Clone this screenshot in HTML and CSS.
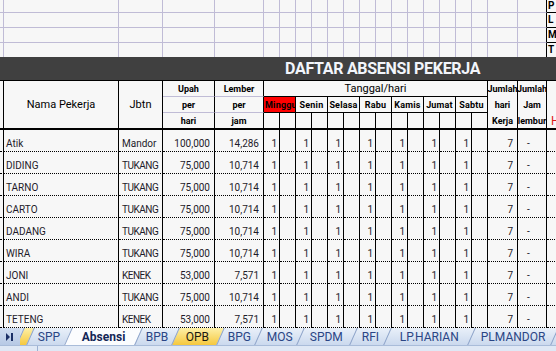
FILE: index.html
```html
<!DOCTYPE html>
<html lang="id">
<head>
  <meta charset="UTF-8">
  <meta name="viewport" content="width=device-width, initial-scale=1.0">
  <title>Daftar Absensi Pekerja</title>
  <link rel="stylesheet" href="styles.css">
</head>
<body>
  <div class="sheet">
    <div class="topgrid" id="topgrid"></div>

    <div class="band"><h1>DAFTAR ABSENSI PEKERJA</h1></div>

    <div class="head">
      <div class="h rn"></div>
      <div class="h tall">Nama Pekerja</div>
      <div class="h tall">Jbtn</div>
      <div class="h sm soft">Upah</div>
      <div class="h sm soft">Lember</div>
      <div class="h tanggal">Tanggal/hari</div>
      <div class="h sm">Jumlah</div>
      <div class="h sm">Jumlah</div>
      <div class="h xtra"></div>

      <div class="h sm soft">per</div>
      <div class="h sm soft">per</div>
      <div class="h sm day minggu">Minggu</div>
      <div class="h sm day">Senin</div>
      <div class="h sm day">Selasa</div>
      <div class="h sm day">Rabu</div>
      <div class="h sm day">Kamis</div>
      <div class="h sm day">Jumat</div>
      <div class="h sm day">Sabtu</div>
      <div class="h sm">hari</div>
      <div class="h sm">Jam</div>
      <div class="h xtra"></div>

      <div class="h sm last">hari</div>
      <div class="h sm last">jam</div>
      <div class="h last"></div><div class="h last"></div>
      <div class="h last"></div><div class="h last"></div>
      <div class="h last"></div><div class="h last"></div>
      <div class="h last"></div><div class="h last"></div>
      <div class="h last"></div><div class="h last"></div>
      <div class="h last"></div><div class="h last"></div>
      <div class="h last"></div><div class="h last"></div>
      <div class="h sm last">Kerja</div>
      <div class="h sm last">lembur</div>
      <div class="h xtra last mark">H</div>
    </div>

    <div class="body" id="rows">
      <!-- rows are filled in by the script below -->
    </div>
  </div>

  <div class="tabs">
    <div class="nav">
      <svg width="8" height="8" viewBox="0 0 8 8"><polygon points="0,0 4,4 0,8" fill="#1b2f66"/><rect x="5" y="0" width="2" height="8" fill="#1b2f66"/></svg>
    </div>
    <div class="tab yel frag"></div>
    <div class="tab w-spp"><span>SPP</span></div>
    <div class="tab on w-abs"><span>Absensi</span></div>
    <div class="tab w-bpb"><span>BPB</span></div>
    <div class="tab yel w-opb"><span>OPB</span></div>
    <div class="tab w-bpg"><span>BPG</span></div>
    <div class="tab w-mos"><span>MOS</span></div>
    <div class="tab w-spdm"><span>SPDM</span></div>
    <div class="tab w-rfi"><span>RFI</span></div>
    <div class="tab w-lp"><span>LP.HARIAN</span></div>
    <div class="tab w-pl"><span>PLMANDOR</span></div>
    <div class="tab w-end"></div>
  </div>
  <div class="strip"><span></span></div>

  <script>
    const workers = [
      ['Atik', 'Mandor', '100,000', '14,286'],
      ['DIDING', 'TUKANG', '75,000', '10,714'],
      ['TARNO', 'TUKANG', '75,000', '10,714'],
      ['CARTO', 'TUKANG', '75,000', '10,714'],
      ['DADANG', 'TUKANG', '75,000', '10,714'],
      ['WIRA', 'TUKANG', '75,000', '10,714'],
      ['JONI', 'KENEK', '53,000', '7,571'],
      ['ANDI', 'TUKANG', '75,000', '10,714'],
      ['TETENG', 'KENEK', '53,000', '7,571']
    ];

    function cell(cls, text) {
      const div = document.createElement('div');
      div.className = cls;
      if (text) div.textContent = text;
      return div;
    }

    // empty grid above the title (22 columns), P/L/M/T box in the last one
    const topGrid = document.getElementById('topgrid');
    const marks = ['P', 'L', 'M', 'T'];
    for (let r = 0; r < 4; r++) {
      for (let c = 0; c < 22; c++) {
        let cls = 'tc';
        if (r === 3) cls += ' nb';
        if (c === 20) cls += ' bk';
        if (c === 21) cls += ' pk';
        topGrid.appendChild(cell(cls, c === 21 ? marks[r] : ''));
      }
    }

    // one row per worker, 7 days of attendance
    const rowBox = document.getElementById('rows');
    workers.forEach(w => {
      const caps = w[1] === w[1].toUpperCase();
      rowBox.appendChild(cell('d', ''));
      rowBox.appendChild(cell('d l', w[0]));
      rowBox.appendChild(cell(caps ? 'd j cap' : 'd j', w[1]));
      rowBox.appendChild(cell('d n', w[2]));
      rowBox.appendChild(cell('d n', w[3]));
      for (let i = 0; i < 14; i++) {
        rowBox.appendChild(cell('d o', i % 2 === 0 ? '1' : ''));
      }
      rowBox.appendChild(cell('d n', '7'));
      rowBox.appendChild(cell('d dash', '-'));
      rowBox.appendChild(cell('d x', ''));
    });
  </script>
</body>
</html>
```

FILE: styles.css
```css
* {
  box-sizing: border-box;
}

body {
  margin: 0;
  width: 556px;
  height: 351px;
  overflow: hidden;
  background-color: #f7f7f7;
  font-family: Roboto, "Liberation Sans", sans-serif;
  color: #1e1b2a;
}

.sheet {
  height: 328px;
  overflow: hidden;
}

.topgrid,
.head,
.body {
  display: grid;
  grid-template-columns: 4px 115px 44px 52px 49px repeat(14, 16px) 30px 29px 40px;
}

/* grid above the title */
.topgrid {
  grid-template-rows: 13px 15px 15px 14px;
}

.tc {
  border-right: 1px solid #c0bcd6;
  border-bottom: 1px solid #c0bcd6;
}

.tc.nb {
  border-bottom: none;
}

.tc.bk {
  border-right-color: #000;
}

.tc.pk {
  border-right: none;
  border-bottom-color: #000;
  display: flex;
  align-items: center;
  padding-left: 1px;
  font-size: 10px;
  font-weight: bold;
  line-height: 12px;
  color: #000;
}

/* title band */
.band {
  height: 24px;
  background-color: #404040;
  border-bottom: 1px solid #000;
}

.band h1 {
  margin: 0;
  padding-left: 285px;
  font-size: 16px;
  font-weight: bold;
  line-height: 23px;
  letter-spacing: -0.3px;
  white-space: nowrap;
  color: #f2f5fb;
}

/* table header */
.head {
  grid-template-rows: 16px 16px 17px;
  color: #000;
}

.h {
  border-right: 1px solid #000;
  display: flex;
  align-items: center;
  justify-content: center;
  overflow: hidden;
  white-space: nowrap;
}

.rn {
  grid-row: span 3;
  border-bottom: 2px solid #000;
}

.tall {
  grid-row: span 3;
  font-size: 11px;
  border-bottom: 2px solid #000;
}

.sm {
  font-size: 9px;
  font-weight: bold;
}

.soft {
  border-bottom: 1px solid #c0bcd6;
}

.tanggal {
  grid-column: span 14;
  font-size: 11px;
  border-bottom: 1px solid #000;
}

.day {
  grid-column: span 2;
  border-bottom: 1px solid #000;
  letter-spacing: 0.2px;
}

.minggu {
  background-color: #ff0000;
  justify-content: flex-start;
  padding-left: 1px;
}

.last {
  border-bottom: 2px solid #000;
}

.xtra {
  border-right: none;
}

.mark {
  justify-content: flex-start;
  padding-left: 4px;
  font-size: 12px;
  color: #e01818;
}

/* worker rows */
.body {
  grid-auto-rows: 22px;
}

.d {
  border-right: 1px solid #000;
  border-bottom: 1px dotted #000;
  display: flex;
  align-items: flex-end;
  padding-bottom: 1px;
  font-size: 10px;
  line-height: 12px;
  white-space: nowrap;
  overflow: hidden;
}

.d.l {
  padding-left: 2px;
}

.d.j {
  padding-left: 3px;
}

.d.cap {
  letter-spacing: -0.5px;
}

.d.n {
  justify-content: flex-end;
  padding-right: 4px;
}

.d.o {
  justify-content: flex-end;
  padding-right: 2px;
}

.d.dash {
  padding-left: 9px;
}

.d.x {
  border-right: none;
}

/* sheet tabs */
.tabs {
  display: flex;
  height: 17px;
  overflow: hidden;
  background: linear-gradient(#d9e4f3, #c3d3eb);
}

.nav {
  flex: none;
  width: 20px;
  display: flex;
  align-items: center;
  justify-content: center;
  background: linear-gradient(#cfdcf0, #b7c9e5);
  position: relative;
  z-index: 1;
}

.tab {
  flex: none;
  height: 17px;
  border-left: 1px solid #8da3c9;
  transform: skewX(-24deg);
  background: linear-gradient(#e9f0f9, #cbd9ee);
  display: flex;
  align-items: center;
  justify-content: center;
  font-size: 12px;
  color: #2a4585;
}

.tab span {
  transform: skewX(24deg);
}

.tab.on {
  background: #fbfcfe;
  font-weight: bold;
  color: #132656;
}

.tab.yel {
  background: linear-gradient(#fdf0a8, #f5c83e);
  color: #1c1a10;
}

.frag { width: 10px; }
.w-spp { width: 38px; }
.w-abs { width: 70px; }
.w-bpb { width: 37px; }
.w-opb { width: 45px; }
.w-bpg { width: 38px; }
.w-mos { width: 42px; }
.w-spdm { width: 53px; }
.w-rfi { width: 34px; }
.w-lp { width: 84px; }
.w-pl { width: 83px; }
.w-end { width: 40px; }

.strip {
  height: 6px;
  background-color: #dfe8f5;
  border-top: 1px solid #a9bcd9;
}

.strip span {
  display: block;
  width: 38px;
  height: 100%;
  border-right: 1px solid #9cb0d2;
}
```
